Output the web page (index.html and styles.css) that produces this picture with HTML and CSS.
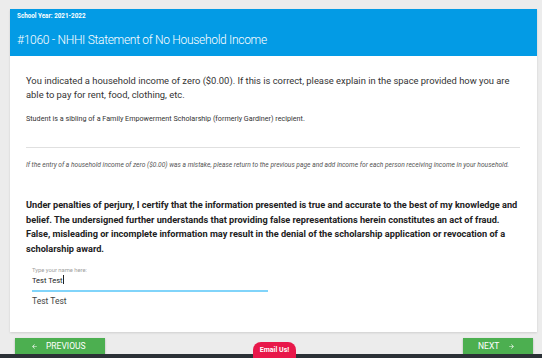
FILE: index.html
```html
<!DOCTYPE html>
<html>
<head>
<meta charset="utf-8">
<link rel="stylesheet" href="styles.css">
</head>
<body>
<div class="page">
  <div class="card">
    <div class="card-header">
      <div class="year">School Year: 2021-2022</div>
      <div class="title">#1060 - NHHI Statement of No Household Income</div>
    </div>
    <div class="card-body">
      <p class="lead">You indicated a household income of zero ($0.00). If this is correct, please explain in the space provided how you are able to pay for rent, food, clothing, etc.</p>
      <p class="small">Student is a sibling of a Family Empowerment Scholarship (formerly Gardiner) recipient.</p>
      <hr class="rule">
      <p class="note">If the entry of a household income of zero ($0.00) was a mistake, please return to the previous page and add income for each person receiving income in your household.</p>
      <p class="cert">Under penalties of perjury, I certify that the information presented is true and accurate to the best of my knowledge and belief. The undersigned further understands that providing false representations herein constitutes an act of fraud. False, misleading or incomplete information may result in the denial of the scholarship application or revocation of a scholarship award.</p>
      <div class="field">
        <label class="field-label">Type your name here:</label>
        <div class="field-input">Test Test<span class="caret"></span></div>
        <div class="field-line"></div>
        <div class="signature">Test Test</div>
      </div>
    </div>
  </div>
  <div class="actions">
    <button class="btn btn-prev"><svg class="arrow" viewBox="0 0 24 24" width="7" height="7"><path fill="#ffffff" d="M20 11H7.83l5.59-5.59L12 4l-8 8 8 8 1.41-1.41L7.83 13H20v-2z"/></svg>PREVIOUS</button>
    <button class="btn btn-next">NEXT<svg class="arrow right" viewBox="0 0 24 24" width="7" height="7"><path fill="#ffffff" d="M12 4l-1.41 1.41L16.17 11H4v2h12.17l-5.58 5.59L12 20l8-8z"/></svg></button>
  </div>
</div>
<div class="footer-bar"></div>
<div class="email">Email Us!</div>
</body>
</html>
```

FILE: styles.css
```css
html, body {
  margin: 0;
  padding: 0;
  height: 358px;
  overflow: hidden;
  background: #ececec;
  font-family: Roboto, "Liberation Sans", sans-serif;
}

.page {
  padding: 9px 5px 0 10px;
}

.card {
  background: #ffffff;
  box-shadow: 0 1px 2px rgba(0, 0, 0, 0.12);
}

.card-header {
  background: #039be5;
  color: #ffffff;
  padding: 2px 8px 6px 7px;
}

.year {
  font-size: 6.3px;
  font-weight: 700;
  line-height: 10px;
}

.title {
  margin-top: 9px;
  font-size: 12px;
  letter-spacing: -0.3px;
  font-weight: 300;
  line-height: 20px;
}

.card-body {
  padding: 18px 17px 25px 16px;
}

.lead {
  margin: 0;
  font-size: 9.4px;
  line-height: 14px;
  color: #333333;
}

.small {
  margin: 12px 0 0 0;
  font-size: 7.2px;
  line-height: 10px;
  color: #333333;
}

.rule {
  margin: 23px 0 0 0;
  border: 0;
  border-top: 1px solid #e0e0e0;
  height: 0;
}

.note {
  margin: 12px 0 0 0;
  font-size: 6.65px;
  line-height: 10px;
  font-style: italic;
  color: #555555;
  white-space: nowrap;
}

.cert {
  margin: 28px 0 0 0;
  font-size: 9.2px;
  line-height: 14.6px;
  font-weight: 700;
  color: #222222;
}

.field {
  margin: 10px 0 0 6px;
  width: 236px;
}

.field-label {
  display: block;
  font-size: 5.8px;
  line-height: 8px;
  color: #9e9e9e;
}

.field-input {
  margin-top: 1px;
  font-size: 7.5px;
  line-height: 10px;
  color: #222222;
}

.caret {
  display: inline-block;
  width: 1px;
  height: 9px;
  background: #222222;
  vertical-align: -1px;
}

.field-line {
  margin-top: 4px;
  height: 2px;
  background: #81d4fa;
}

.signature {
  margin-top: 3px;
  font-size: 8.5px;
  line-height: 12px;
  color: #444444;
}

.actions {
  display: flex;
  justify-content: space-between;
  padding: 6px 4px 0 5px;
}

.btn {
  border: 0;
  background: #4caf50;
  color: #ffffff;
  font-family: Roboto, "Liberation Sans", sans-serif;
  font-size: 8.5px;
  height: 16px;
  padding: 0;
  display: flex;
  align-items: center;
  box-shadow: 0 1px 2px rgba(0, 0, 0, 0.25);
}

.btn-prev {
  width: 90px;
  padding-left: 16px;
}

.btn-next {
  width: 70px;
  padding-left: 15px;
}

.arrow {
  margin-right: 8px;
}

.arrow.right {
  margin-right: 0;
  margin-left: 9px;
}

.footer-bar {
  position: fixed;
  left: 0;
  right: 0;
  bottom: 0;
  height: 4px;
  background: #2b3136;
}

.email {
  position: fixed;
  left: 253px;
  bottom: 0;
  width: 43px;
  height: 16px;
  background: #e8184a;
  color: #ffffff;
  font-size: 7px;
  font-weight: 700;
  line-height: 16px;
  text-align: center;
  border-radius: 8px 8px 0 0;
}
```
